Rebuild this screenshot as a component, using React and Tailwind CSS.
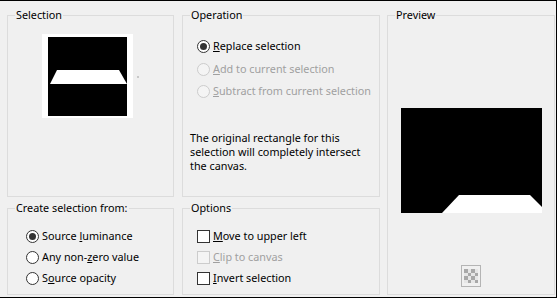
import React from 'react';

const font = { fontFamily: '"Noto Sans", "Liberation Sans", sans-serif' };

function Group({ title, className = '', children }) {
  return (
    <fieldset className={`border border-[#dcdcdc] ${className}`}>
      <legend className="ml-[7px] px-[1px] leading-[16px] text-black">{title}</legend>
      {children}
    </fieldset>
  );
}

function Radio({ checked, disabled, className = '', children }) {
  return (
    <div className={`flex items-center ${className} ${disabled ? 'text-[#a0a0a0]' : 'text-black'}`}>
      <span
        className={`w-[13px] h-[13px] shrink-0 rounded-full border flex items-center justify-center ${
          disabled ? 'border-[#cccccc] bg-[#f4f4f4]' : 'border-[#333333] bg-white'
        }`}
      >
        {checked && <span className="w-[7px] h-[7px] rounded-full bg-[#333333]" />}
      </span>
      <span className="ml-[3px] whitespace-nowrap">{children}</span>
    </div>
  );
}

function Check({ disabled, children }) {
  return (
    <div className={`flex items-center h-[21px] ${disabled ? 'text-[#a0a0a0]' : 'text-black'}`}>
      <span
        className={`w-[13px] h-[13px] shrink-0 border ${
          disabled ? 'border-[#cccccc] bg-[#f4f4f4]' : 'border-[#333333] bg-white'
        }`}
      />
      <span className="ml-[3px] whitespace-nowrap">{children}</span>
    </div>
  );
}

export default function App() {
  return (
    <div
      className="w-[557px] h-[298px] bg-[#f0f0f0] border-t border-r border-b border-black pl-[7px] pt-[6px] flex gap-[8px] text-[10.8px] overflow-hidden"
      style={font}
    >
      {/* left column */}
      <div className="w-[167px] flex flex-col gap-[3px]">
        <Group title="Selection" className="h-[190px]">
          <div className="flex items-start ml-[34px] mt-[11px]">
            <div className="w-[91px] h-[84px] bg-white pt-[3px] pl-[6px]">
              <svg width="79" height="79" viewBox="0 0 79 79" className="block">
                <rect width="79" height="79" fill="#000" />
                <polygon points="9,33 71,33 79,47 2,47" fill="#fff" />
              </svg>
            </div>
            <span className="w-[2px] h-[2px] bg-[#c8c8c8] ml-[4px] mt-[42px]" />
          </div>
        </Group>
        <Group title="Create selection from:" className="h-[95px]">
          <div className="pl-[18px] mt-[10px] flex flex-col">
            <Radio checked className="h-[21px]">
              Source <u>l</u>uminance
            </Radio>
            <Radio className="h-[21px]">
              Any non-<u>z</u>ero value
            </Radio>
            <Radio className="h-[21px]">
              S<u>o</u>urce opacity
            </Radio>
          </div>
        </Group>
      </div>

      {/* middle column */}
      <div className="w-[198px] flex flex-col gap-[3px]">
        <Group title="Operation" className="h-[190px]">
          <div className="pl-[14px] mt-[12px] flex flex-col">
            <Radio checked className="h-[23px]">
              <u>R</u>eplace selection
            </Radio>
            <Radio disabled className="h-[22px]">
              <u>A</u>dd to current selection
            </Radio>
            <Radio disabled className="h-[22px]">
              <u>S</u>ubtract from current selection
            </Radio>
          </div>
          <p className="pl-[7px] mt-[29px] leading-[14px] text-black">
            The original rectangle for this
            <br />
            selection will completely intersect
            <br />
            the canvas.
          </p>
        </Group>
        <Group title="Options" className="h-[95px]">
          <div className="pl-[14px] mt-[10px] flex flex-col">
            <Check>
              <u>M</u>ove to upper left
            </Check>
            <Check disabled>
              <u>C</u>lip to canvas
            </Check>
            <Check>
              <u>I</u>nvert selection
            </Check>
          </div>
        </Group>
      </div>

      {/* right column */}
      <div className="w-[168px] -ml-[1px]">
        <Group title="Preview" className="h-[288px]">
          <div className="flex flex-col items-center">
            <svg width="141" height="105" viewBox="0 0 141 105" className="block mt-[85px]">
              <rect width="141" height="105" fill="#000" />
              <polygon points="58,87 129,87 141,99 141,105 41,105" fill="#fff" />
            </svg>
            <div className="mt-[52px] w-[20px] h-[22px] border border-[#b4b4b4] bg-[#f0f0f0] flex items-center justify-center">
              <svg width="14" height="14" viewBox="0 0 4 4" className="block" shapeRendering="crispEdges">
                <rect width="4" height="4" fill="#e6e6e6" />
                <rect x="0" y="0" width="1" height="1" fill="#a8a8a8" />
                <rect x="2" y="0" width="1" height="1" fill="#a8a8a8" />
                <rect x="1" y="1" width="1" height="1" fill="#a8a8a8" />
                <rect x="3" y="1" width="1" height="1" fill="#a8a8a8" />
                <rect x="0" y="2" width="1" height="1" fill="#a8a8a8" />
                <rect x="2" y="2" width="1" height="1" fill="#a8a8a8" />
                <rect x="1" y="3" width="1" height="1" fill="#a8a8a8" />
                <rect x="3" y="3" width="1" height="1" fill="#a8a8a8" />
              </svg>
            </div>
          </div>
        </Group>
      </div>
    </div>
  );
}
